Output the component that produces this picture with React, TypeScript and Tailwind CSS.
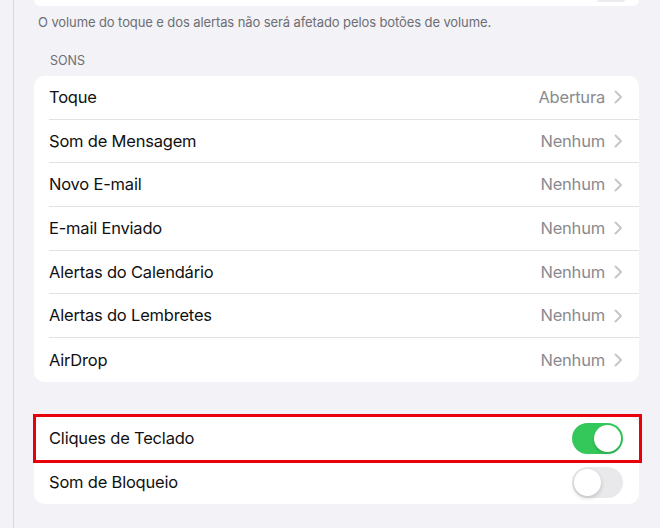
import React from "react";

const rows: { label: string; value: string }[] = [
  { label: "Toque", value: "Abertura" },
  { label: "Som de Mensagem", value: "Nenhum" },
  { label: "Novo E-mail", value: "Nenhum" },
  { label: "E-mail Enviado", value: "Nenhum" },
  { label: "Alertas do Calendário", value: "Nenhum" },
  { label: "Alertas do Lembretes", value: "Nenhum" },
  { label: "AirDrop", value: "Nenhum" },
];

function Chevron() {
  return (
    <svg width="9" height="14" viewBox="0 0 9 14" className="ml-[9px] mr-[16px]">
      <polyline points="1.5,1.5 7,7 1.5,12.5" fill="none" stroke="#c4c4c8" strokeWidth="1.8" strokeLinecap="round" strokeLinejoin="round" />
    </svg>
  );
}

function Toggle({ on }: { on: boolean }) {
  return (
    <div
      className={
        on
          ? "relative w-[51px] h-[31px] rounded-full bg-[#34c759] mr-[16px]"
          : "relative w-[51px] h-[31px] rounded-full bg-[#e9e9eb] mr-[16px]"
      }
    >
      <div
        className={
          on
            ? "absolute top-[2px] left-[22px] w-[27px] h-[27px] rounded-full bg-white shadow-[0_2px_3px_rgba(0,0,0,0.15)]"
            : "absolute top-[2px] left-[2px] w-[27px] h-[27px] rounded-full bg-white shadow-[0_2px_4px_rgba(0,0,0,0.18)]"
        }
      />
    </div>
  );
}

export default function App() {
  return (
    <div
      className="w-[660px] h-[528px] overflow-hidden bg-[#f2f2f7] flex"
      style={{ fontFamily: "Inter, 'Liberation Sans', sans-serif" }}
    >
      <div className="w-[14px] shrink-0 h-full bg-[#f2f2f7] border-r border-[#d9d9dd]" />
      <div className="flex-1 pl-[20px] pr-[21px] flex flex-col">
        <div className="h-[6px] bg-white rounded-b-[10px] relative">
          <div className="absolute right-[14px] top-0 w-[28px] h-[2px] rounded-b-full bg-[#ececee]" />
        </div>
        <div className="mt-[8px] pl-[4px] text-[13px] leading-[16px] text-[#6e6e73] tracking-[-0.1px]">
          O volume do toque e dos alertas não será afetado pelos botões de volume.
        </div>
        <div className="mt-[23px] pl-[16px] text-[12.5px] leading-[16px] text-[#6e6e73]">SONS</div>
        <div className="mt-[7px] bg-white rounded-[10px] overflow-hidden">
          {rows.map((r, i) => (
            <div key={r.label} className="flex items-stretch pl-[15px] h-[43.7px]">
              <div
                className={
                  i < rows.length - 1
                    ? "flex-1 flex items-center border-b border-[#e2e2e5]"
                    : "flex-1 flex items-center"
                }
              >
                <span className="flex-1 text-[16.5px] text-[#111] tracking-[-0.2px]">{r.label}</span>
                <span className="text-[16.5px] text-[#8a8a8e] tracking-[-0.2px]">{r.value}</span>
                <Chevron />
              </div>
            </div>
          ))}
        </div>
        <div className="mt-[35px] bg-white rounded-[10px] relative">
          <div className="flex items-stretch pl-[15px] h-[44px]">
            <div className="flex-1 flex items-center border-b border-[#e2e2e5]">
              <span className="flex-1 text-[16.5px] text-[#111] tracking-[-0.2px]">Cliques de Teclado</span>
              <Toggle on={true} />
            </div>
          </div>
          <div className="flex items-stretch pl-[15px] h-[43px]">
            <div className="flex-1 flex items-center">
              <span className="flex-1 text-[16.5px] text-[#111] tracking-[-0.2px]">Som de Bloqueio</span>
              <Toggle on={false} />
            </div>
          </div>
          <div className="absolute left-[-1px] right-[-3px] top-[-3px] h-[49px] border-[3px] border-[#e8000b] pointer-events-none" />
        </div>
      </div>
    </div>
  );
}
